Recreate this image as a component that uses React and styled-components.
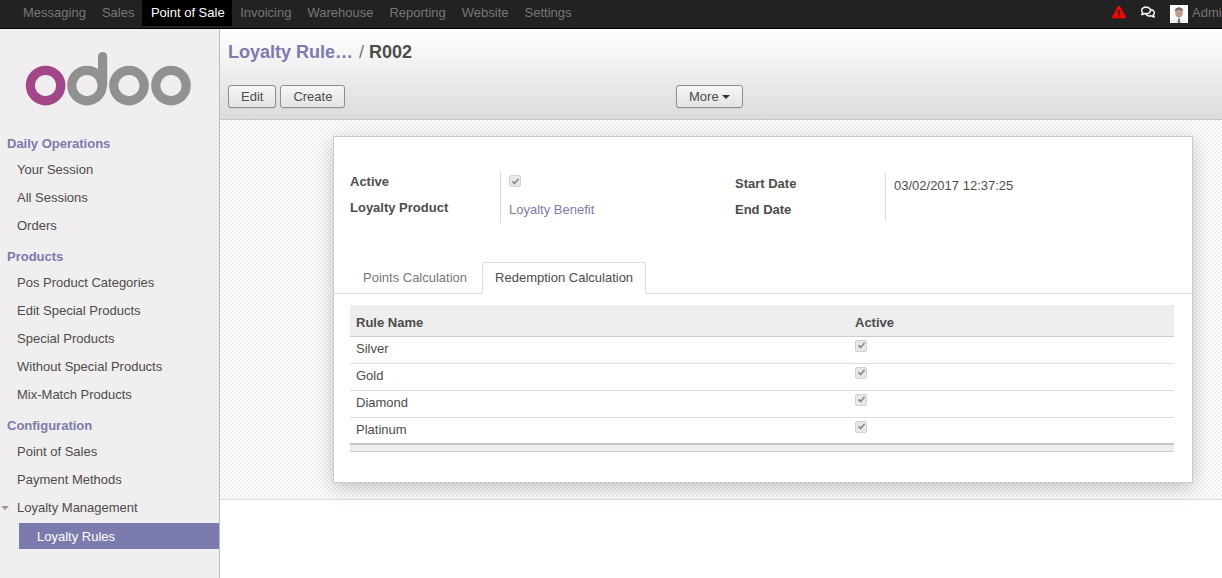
import React from "react";
import styled, { createGlobalStyle } from "styled-components";
import { FaExclamationTriangle, FaRegComments } from "react-icons/fa";

const Global = createGlobalStyle`
  html, body { margin: 0; padding: 0; background: #fff; height: 100%; overflow: hidden; }
  body { font-family: "Liberation Sans", Arial, sans-serif; font-size: 13px; color: #4c4c4c; }
  * { box-sizing: border-box; }
`;

const Page = styled.div`display:flex;flex-direction:column;width:1222px;height:578px;overflow:hidden;`;
const TopBar = styled.header`
  height:29px;flex:none;background:#222;border-bottom:1px solid #000;display:flex;justify-content:space-between;padding-left:15px;
`;
const TopNav = styled.nav`display:flex;height:26px;`;
const TopItem = styled.a`
  padding:0 ${p=>p.$active?"7.5px 0 8.5px":"8px"};line-height:25px;height:26px;color:${p=>p.$active?"#fff":"#777"};background:${p=>p.$active?"#000":"transparent"};
`;
const TopRight = styled.div`display:flex;align-items:center;height:24px;`;
const AlertIcon = styled(FaExclamationTriangle)`color:#f00;font-size:14px;margin-right:15px;`;
const ChatIcon = styled(FaRegComments)`color:#fff;font-size:14px;margin-right:15px;stroke:#fff;stroke-width:14px;`;
const AvatarBox = styled.svg`width:18px;height:18px;margin-right:4px;margin-top:4px;display:block;`;
const UserName = styled.span`color:#777;width:30px;overflow:hidden;white-space:nowrap;`;

const Body = styled.div`flex:1;display:flex;min-height:0;`;
const Sidebar = styled.aside`
  width:220px;flex:none;background:#f0eeee;border-right:1px solid #bbb;padding-top:23px;
`;
const LogoSvg = styled.svg`display:block;width:219px;height:60px;margin-bottom:23px;`;
const SectionTitle = styled.div`
  font-weight:bold;color:#7c7bad;padding-left:7px;line-height:18px;height:18px;margin-bottom:3px;
`;
const MenuItem = styled.a`
  display:block;padding-left:17px;line-height:28px;height:28px;color:#4c4c4c;
`;
const MenuGroup = styled.div`margin-bottom:8px;`;
const ParentItem = styled(MenuItem)`position:relative;`;
const Caret = styled.span`
  position:absolute;left:1px;top:12px;width:0;height:0;border-left:4px solid transparent;border-right:4px solid transparent;border-top:4px solid #999;
`;
const ActiveItem = styled.a`
  display:block;margin:1px 0 0 19px;height:26px;line-height:27px;padding-left:18px;background:#7c7bad;color:#fff;
`;

const Main = styled.main`flex:1;display:flex;flex-direction:column;min-width:0;`;
const Control = styled.div`
  height:91px;flex:none;background:linear-gradient(#fff,#dcdcdc);border-bottom:1px solid #c8c8c8;padding:12px 8px 0;
`;
const Crumbs = styled.div`font-size:18px;font-weight:bold;line-height:22px;height:22px;color:#4c4c4c;margin-bottom:22px;`;
const CrumbLink = styled.a`color:#7c7bad;`;
const CrumbSep = styled.span`color:#777;font-weight:normal;margin:0 5px 0 6px;`;
const Actions = styled.div`display:flex;`;
const ButtonGroup = styled.div`display:flex;gap:4px;width:448px;`;
const Btn = styled.button`
  height:23px;padding:0 12px;font:13px "Liberation Sans",Arial,sans-serif;color:#4c4c4c;
  background:linear-gradient(#f6f6f6,#e4e4e4);border:1px solid #8f8f8f;border-radius:3px;display:flex;align-items:center;gap:3px;
  box-shadow:0 1px 1px rgba(0,0,0,.08);
`;
const BtnCaret = styled.span`
  width:0;height:0;border-left:4px solid transparent;border-right:4px solid transparent;border-top:4px solid #333;
`;

const Sheet = styled.div`
  height:380px;flex:none;border-bottom:1px solid #ddd;padding:16px 0 0 113px;
  background-color:#fff;
  background-image:repeating-conic-gradient(#f0f0f0 0 25%, #fff 0 50%);
  background-size:4px 4px;
`;
const Card = styled.section`
  width:860px;height:347px;background:#fff;border:1px solid #c9c9d6;box-shadow:0 5px 18px rgba(0,0,0,.22);padding-top:34px;
`;
const FormGrid = styled.div`display:flex;padding-left:16px;height:82px;`;
const LabelCol = styled.div`width:150px;`;
const Label = styled.div`font-weight:bold;line-height:22px;height:22px;margin-bottom:4px;color:#4c4c4c;`;
const ValueCol = styled.div`
  width:${p=>p.$w}px;height:${p=>p.$h}px;margin-top:${p=>p.$top}px;border-left:1px solid #ddd;padding-left:8px;
`;
const LabelCol2 = styled.div`width:150px;padding-top:2px;`;
const ValueLine = styled.div`line-height:26px;height:26px;display:flex;align-items:center;`;
const LinkValue = styled.a`color:#7c7bad;`;
const DateVal = styled.div`line-height:26px;`;

const Tabs = styled.div`
  display:flex;height:32px;border-bottom:1px solid #ddd;padding-left:16px;margin-top:9px;margin-bottom:11px;
`;
const Tab = styled.a`
  height:32px;line-height:30px;padding:0 12px;margin-right:2px;border:1px solid ${p=>p.$active?"#ddd":"transparent"};
  border-bottom-color:${p=>p.$active?"#fff":"transparent"};border-radius:3px 3px 0 0;background:${p=>p.$active?"#fff":"transparent"};
  color:${p=>p.$active?"#4c4c4c":"#777"};
`;
const TableWrap = styled.div`padding-left:16px;`;
const Table = styled.table`width:824px;border-collapse:collapse;table-layout:fixed;`;
const Th = styled.th`
  height:31px;background:#eee;border-bottom:1px solid #ccc;text-align:left;padding:4px 6px 0;font-weight:bold;color:#4c4c4c;
  &:first-child{width:499px;}
`;
const Td = styled.td`
  height:27px;border-bottom:${p=>p.$last?"none":"1px solid #ddd"};padding:5px 6px 0;line-height:14px;vertical-align:top;color:#4c4c4c;
`;
const Tfoot = styled.td`height:7px;padding:0;background:#eee;border-top:2px solid #c4c4c4;border-bottom:1px solid #ccc;`;
const Check = styled.span`
  display:flex;width:12px;height:12px;border:1px solid #d2d2d2;border-radius:2px;background:#e8e8e8;align-items:center;justify-content:center;
  position:relative;top:${p=>p.$top}px;
`;
const CheckSvg = styled.svg`width:9px;height:9px;display:block;`;

const tick = (top) => (
  <Check $top={top}><CheckSvg viewBox="0 0 10 10"><path d="M1 5.5L2.4 4.2L4 5.8L7.8 1.5L9 2.8L4 8.6Z" fill="#8a8a8a"/></CheckSvg></Check>
);

const Logo = () => (
  <LogoSvg viewBox="0 0 219 60">
    <g fill="none" strokeWidth="9.2">
      <circle cx="45.6" cy="33.6" r="15.2" stroke="#a24689"/>
      <circle cx="87" cy="33.6" r="15.2" stroke="#919191"/>
      <circle cx="129" cy="33.6" r="15.2" stroke="#919191"/>
      <circle cx="171" cy="33.6" r="15.2" stroke="#919191"/>
      <path d="M102.6 4.600V33" stroke="#919191" strokeLinecap="round"/>
    </g>
  </LogoSvg>
);

const Avatar = () => (
  <AvatarBox viewBox="0 0 18 18">
    <rect width="18" height="18" fill="#fff"/>
    <path d="M1 18c0-3 3-4 8-4s8 1 8 4z" fill="#ececec"/>
    <path d="M8.200 13.500h1.600l.5 4.500H7.700z" fill="#667"/>
    <ellipse cx="9" cy="7.500" rx="3.800" ry="5.300" fill="#c09a8a"/>
    <path d="M4.800 6.500C4.300 1 13.700 1 13.200 6.500 12 4.500 6 4.500 4.800 6.500z" fill="#77706c"/>
  </AvatarBox>
);

const top = ["Messaging","Sales","Point of Sale","Invoicing","Warehouse","Reporting","Website","Settings"];
const rows = ["Silver","Gold","Diamond","Platinum"];

export default function App() {
  return (
    <Page>
      <Global />
      <TopBar>
        <TopNav>
          {top.map(t => <TopItem key={t} $active={t==="Point of Sale"}>{t}</TopItem>)}
        </TopNav>
        <TopRight>
          <AlertIcon />
          <ChatIcon />
          <Avatar />
          <UserName>Admin</UserName>
        </TopRight>
      </TopBar>
      <Body>
        <Sidebar>
          <Logo />
          <MenuGroup>
            <SectionTitle>Daily Operations</SectionTitle>
            <MenuItem>Your Session</MenuItem>
            <MenuItem>All Sessions</MenuItem>
            <MenuItem>Orders</MenuItem>
          </MenuGroup>
          <MenuGroup>
            <SectionTitle>Products</SectionTitle>
            <MenuItem>Pos Product Categories</MenuItem>
            <MenuItem>Edit Special Products</MenuItem>
            <MenuItem>Special Products</MenuItem>
            <MenuItem>Without Special Products</MenuItem>
            <MenuItem>Mix-Match Products</MenuItem>
          </MenuGroup>
          <SectionTitle>Configuration</SectionTitle>
          <MenuItem>Point of Sales</MenuItem>
          <MenuItem>Payment Methods</MenuItem>
          <ParentItem><Caret />Loyalty Management</ParentItem>
          <ActiveItem>Loyalty Rules</ActiveItem>
        </Sidebar>
        <Main>
          <Control>
            <Crumbs><CrumbLink>Loyalty Rule…</CrumbLink><CrumbSep>/</CrumbSep>R002</Crumbs>
            <Actions>
              <ButtonGroup>
                <Btn>Edit</Btn>
                <Btn>Create</Btn>
              </ButtonGroup>
              <Btn>More<BtnCaret /></Btn>
            </Actions>
          </Control>
          <Sheet>
            <Card>
              <FormGrid>
                <LabelCol>
                  <Label>Active</Label>
                  <Label>Loyalty Product</Label>
                </LabelCol>
                <ValueCol $w={235} $h={52} $top={0}>
                  <ValueLine>{tick(-3)}</ValueLine>
                  <ValueLine><LinkValue>Loyalty Benefit</LinkValue></ValueLine>
                </ValueCol>
                <LabelCol2>
                  <Label>Start Date</Label>
                  <Label>End Date</Label>
                </LabelCol2>
                <ValueCol $w={290} $h={48} $top={2}>
                  <DateVal>03/02/2017 12:37:25</DateVal>
                </ValueCol>
              </FormGrid>
              <Tabs>
                <Tab>Points Calculation</Tab>
                <Tab $active>Redemption Calculation</Tab>
              </Tabs>
              <TableWrap>
                <Table>
                  <thead><tr><Th>Rule Name</Th><Th>Active</Th></tr></thead>
                  <tbody>
                    {rows.map((r,i) => (
                      <tr key={r}><Td $last={i===3}>{r}</Td><Td $last={i===3}>{tick(-2)}</Td></tr>
                    ))}
                  </tbody>
                  <tfoot><tr><Tfoot colSpan={2} /></tr></tfoot>
                </Table>
              </TableWrap>
            </Card>
          </Sheet>
        </Main>
      </Body>
    </Page>
  );
}
